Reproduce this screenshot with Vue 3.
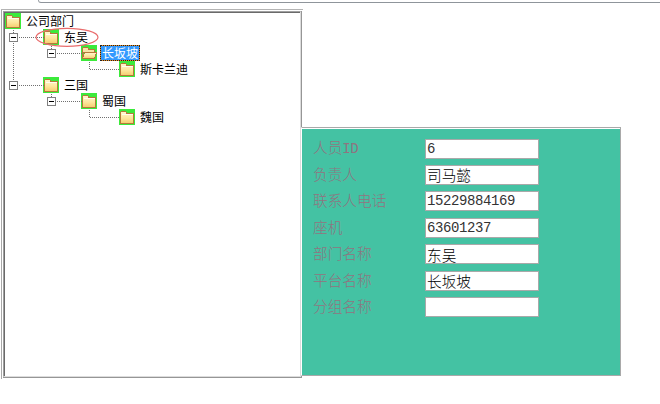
<script setup>
const nodes = [
  { text: '公司部门', level: 0 },
  { text: '东吴', level: 1 },
  { text: '长坂坡', level: 2, selected: true },
  { text: '斯卡兰迪', level: 3 },
  { text: '三国', level: 1 },
  { text: '蜀国', level: 2 },
  { text: '魏国', level: 3 }
]
const fields = [
  { label: '人员', latin: 'ID', value: '6', kind: 'num' },
  { label: '负责人', value: '司马懿', kind: 'cjk' },
  { label: '联系人电话', value: '15229884169', kind: 'num' },
  { label: '座机', value: '63601237', kind: 'num' },
  { label: '部门名称', value: '东吴', kind: 'cjk' },
  { label: '平台名称', value: '长坂坡', kind: 'cjk' },
  { label: '分组名称', value: '', kind: 'cjk' }
]
const dotted = [
  'M13 29V33', 'M13 42V81', 'M18 37H43', 'M18 85H43',
  'M51 45V49', 'M56 53H81', 'M89 61V69', 'M89 69H119',
  'M51 93V97', 'M56 101H81', 'M89 109V117', 'M89 117H119'
]
const expanders = [
  { x: 9, y: 33 }, { x: 47, y: 49 }, { x: 9, y: 81 }, { x: 47, y: 97 }
]
</script>

<template>
  <div class="page">
    <svg class="defs" width="0" height="0" aria-hidden="true">
      <defs>
        <linearGradient id="fold" x1="0" y1="0" x2="0" y2="1">
          <stop offset="0" stop-color="#fff8d0" />
          <stop offset="0.55" stop-color="#fde79e" />
          <stop offset="1" stop-color="#f5cc6e" />
        </linearGradient>
        <symbol id="closed" viewBox="0 0 16 16">
          <rect width="16" height="16" fill="#3bea3b" />
          <path d="M1.5 14.5V4L2.5 2.5H6.5L8 4.5H14.5V14.5Z" fill="url(#fold)" stroke="#b5793a" />
          <path d="M2.5 5.5H13.5" stroke="#fffdf0" />
        </symbol>
        <symbol id="opened" viewBox="0 0 16 16">
          <rect width="16" height="16" fill="#3bea3b" />
          <path d="M1.5 13.5V4L2.5 2.5H6.5L8 4.5H13.5V7.5H1.5Z" fill="#f7e6a8" stroke="#b5793a" />
          <path d="M1.5 13.5L3.5 7.5H15.5L13.5 13.5Z" fill="url(#fold)" stroke="#b5793a" />
        </symbol>
      </defs>
    </svg>

    <div class="topbar"></div>
    <div class="rule"></div>
    <div class="main">
      <div class="frame">
        <div class="frame-in">
          <div class="tree">
            <div v-for="n in nodes" :key="n.text" class="row" :class="'lv' + n.level">
              <svg class="folder" width="16" height="16" shape-rendering="crispEdges">
                <use :href="n.selected ? '#opened' : '#closed'" />
              </svg>
              <span class="node" :class="{ selected: n.selected }">{{ n.text }}</span>
            </div>
            <svg class="lines" width="297" height="365" viewBox="3 11 297 365" shape-rendering="crispEdges">
              <path v-for="d in dotted" :key="d" :d="d" class="dot" transform="translate(0.5 0.5)" />
              <g v-for="e in expanders" :key="e.x + '-' + e.y">
                <rect :x="e.x + 0.5" :y="e.y + 0.5" width="8" height="8" fill="#fff" stroke="#808080" />
                <path :d="`M${e.x + 2} ${e.y + 4.5}H${e.x + 7}`" stroke="#000" />
              </g>
              <ellipse cx="67" cy="37.3" rx="31" ry="9" fill="none" stroke="#e96d6d" stroke-width="1.2" shape-rendering="auto" />
            </svg>
          </div>
        </div>
      </div>

      <div class="panel">
        <div v-for="f in fields" :key="f.label" class="field">
          <label class="lbl">{{ f.label }}<span v-if="f.latin" class="lat">{{ f.latin }}</span></label>
          <input class="inp" :class="f.kind" type="text" :value="f.value" />
        </div>
      </div>
    </div>
  </div>
</template>

<style>
html, body { margin: 0; background: #fff; }
</style>

<style scoped>
.page {
  width: 660px;
  height: 404px;
  background: #fff;
  overflow: hidden;
  font-family: "Noto Sans CJK SC", "Liberation Sans", sans-serif;
}
.defs { position: absolute; }
.topbar {
  height: 3px;
  margin-left: 38px;
  box-sizing: border-box;
  border-left: 1px solid #9a9fa4;
  border-bottom: 1px solid #8f959b;
  border-bottom-left-radius: 4px;
}
.rule {
  width: 302px;
  height: 1px;
  margin: 6px 0 0 1px;
  background: #b4b4b4;
}
.main { display: flex; align-items: flex-start; }
.frame {
  width: 301px;
  height: 369px;
  margin-left: 1px;
  padding: 1px 0 0 1px;
  box-sizing: border-box;
  border-left: 1px solid #a8a8a8;
}
.frame-in {
  height: 367px;
  box-sizing: border-box;
  border-right: 1px solid #969696;
  border-bottom: 1px solid #969696;
}
.tree {
  position: relative;
  height: 366px;
  box-sizing: border-box;
  padding: 1px;
  background: #fff;
  border: 1px solid;
  border-color: #a0a0a0 #dcdcdc #dcdcdc #a0a0a0;
  box-shadow: inset 1px 1px 0 #6a6a6a;
}
.row {
  display: flex;
  align-items: center;
  height: 16px;
  font-size: 12px;
  line-height: 14px;
  color: #000;
}
.lv1 { padding-left: 38px; }
.lv2 { padding-left: 76px; }
.lv3 { padding-left: 114px; }
.folder { display: block; flex: none; }
.node {
  margin-left: 3px;
  padding: 0 1px;
  height: 14px;
  border: 1px dotted transparent;
  white-space: nowrap;
}
.node.selected {
  background: linear-gradient(#3399ff, #3399ff) padding-box, #e8891e border-box;
  color: #fff;
  border-color: #222;
}
.lines {
  position: absolute;
  left: -1px;
  top: -1px;
  pointer-events: none;
}
.dot {
  fill: none;
  stroke: #707070;
  stroke-width: 1;
  stroke-dasharray: 1 1;
}
.panel {
  position: relative;
  width: 320px;
  height: 249px;
  margin: 117px 0 0 -1px;
  padding: 10px 0 0 11px;
  box-sizing: border-box;
  display: flex;
  flex-direction: column;
  gap: 6.5px;
  background: #44c2a3;
  border: 1px solid #a9a9a9;
  border-left-color: #fff;
  box-shadow: inset 0 1px 0 #fff;
}
.field {
  display: grid;
  grid-template-columns: 112px 114px;
  align-items: center;
  height: 20px;
}
.lbl {
  font-size: 14.67px;
  font-weight: 300;
  line-height: 18px;
  margin-bottom: 2px;
  color: #8f7480;
  white-space: nowrap;
}
.lat {
  font-family: "Liberation Mono", monospace;
  font-size: 14px;
  letter-spacing: -0.4px;
}
.inp {
  width: 114px;
  height: 20px;
  box-sizing: border-box;
  margin: 0;
  padding: 0 1px;
  border: 1px solid #a9a9a9;
  border-radius: 0;
  background: #fff;
  color: #333;
  outline: 0;
}
.inp.num {
  font-family: "Liberation Mono", monospace;
  font-size: 14px;
  letter-spacing: -0.4px;
}
.inp.cjk {
  font-family: "Noto Sans CJK SC", sans-serif;
  font-size: 14.67px;
  font-weight: 300;
  color: #000;
}
</style>
